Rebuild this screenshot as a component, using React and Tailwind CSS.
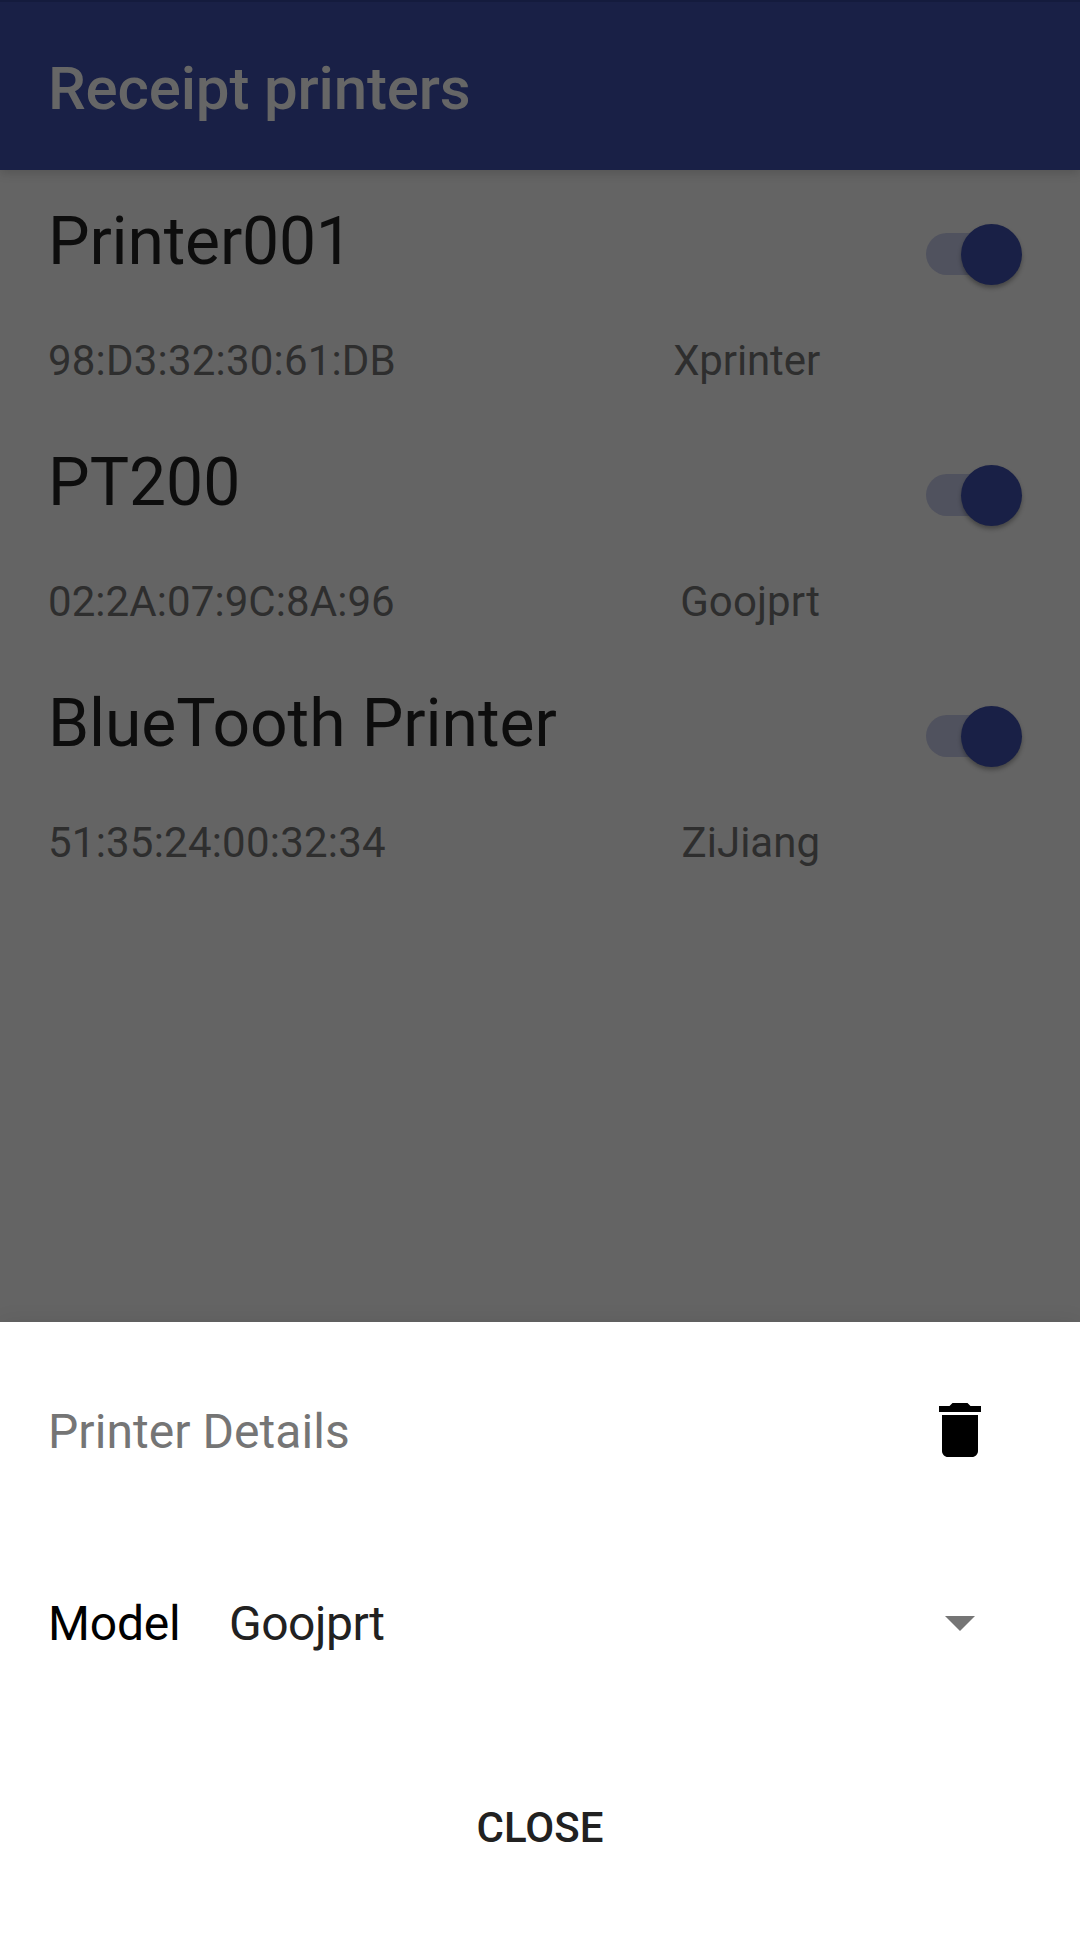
function Row({ name, mac, model, nameStyle, macStyle, modelStyle }) {
  return (
    <li className="flex h-[241px] pl-[48px] text-[#0d0d0d]">
      <div className="w-[772px]">
        <div className={`h-[116px] pt-[33px] text-[66px] leading-[77px] whitespace-nowrap ${nameStyle}`}>{name}</div>
        <div className="mt-[50px] flex justify-between text-[42px] leading-[49px] text-[#2e2e2e]">
          <span className={macStyle}>{mac}</span>
          <span className={modelStyle}>{model}</span>
        </div>
      </div>
      <div className="relative mt-[63px] ml-[106px] h-[42px] w-[94px] rounded-full bg-[#50525e]">
        <div className="absolute top-[-9px] left-[35px] size-[61px] rounded-full bg-[#192046] shadow-[0_3px_4px_rgba(0,0,0,0.3)]" />
      </div>
    </li>
  );
}

const printers = [
  { name: "Printer001", mac: "98:D3:32:30:61:DB", model: "Xprinter", nameStyle: "tracking-[-0.2px]", macStyle: "tracking-[0.2px]", modelStyle: "tracking-[-0.12px]" },
  { name: "PT200", mac: "02:2A:07:9C:8A:96", model: "Goojprt", nameStyle: "", macStyle: "tracking-[0.08px]", modelStyle: "tracking-[0.1px]" },
  { name: "BlueTooth Printer", mac: "51:35:24:00:32:34", model: "ZiJiang", nameStyle: "tracking-[-0.06px]", macStyle: "tracking-[0.22px]", modelStyle: "" },
];

export default function App() {
  return (
    <div className="flex h-[1946px] w-[1080px] flex-col overflow-hidden bg-[#646464] font-['Roboto',sans-serif]">
      <header className="flex h-[170px] shrink-0 items-center border-t-2 border-[#141b3d] bg-[#192046] pt-[5px] pl-[48px] text-[60px] leading-[70px] font-medium tracking-[-0.16px] text-[#666666] shadow-[0_3px_10px_rgba(0,0,0,0.16)]">
        Receipt printers
      </header>
      <ul className="h-[1152px] shrink-0">
        {printers.map((p) => (
          <Row key={p.name} {...p} />
        ))}
      </ul>
      <section className="flex flex-1 flex-col bg-white shadow-[0_0_20px_rgba(0,0,0,0.08)]">
        <div className="flex h-[192px] items-center justify-between pt-[28px] pr-[99px] pl-[48px]">
          <h2 className="text-[48px] leading-[56px] tracking-[0.06px] text-[#757575]">Printer Details</h2>
          <svg className="mb-[4px] h-[54px] w-[42px]" viewBox="5 3 14 18">
            <path d="M6 19c0 1.100.9 2 2 2h8c1.100 0 2-.9 2-2V7H6v12zM19 4h-3.500l-1-1h-5l-1 1H5v2h14V4z" />
          </svg>
        </div>
        <div className="flex h-[219px] items-center pr-[105px] pl-[48px] text-[48px] leading-[56px]">
          <span className="w-[181px] tracking-[-0.2px] text-black">Model</span>
          <span className="flex-1 tracking-[-0.5px] text-[#212121]">Goojprt</span>
          <svg className="h-[15px] w-[30px]" viewBox="0 0 10 5">
            <path d="M0 0l5 5 5-5z" fill="#757575" />
          </svg>
        </div>
        <button className="mt-[70px] self-center text-[42px] leading-[49px] font-medium text-[#212121]">CLOSE</button>
      </section>
    </div>
  );
}
